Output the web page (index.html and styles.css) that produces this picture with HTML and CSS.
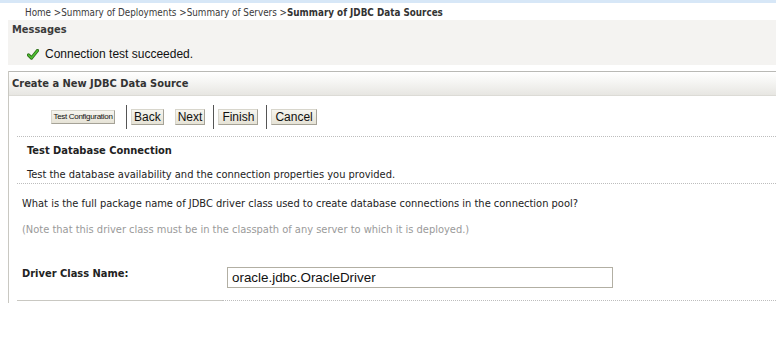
FILE: index.html
```html
<!DOCTYPE html>
<html lang="en">
<head>
  <meta charset="UTF-8">
  <title>Create a New JDBC Data Source</title>
  <link rel="stylesheet" href="styles.css">
</head>
<body>
  <div class="top-bar"></div>

  <!-- Breadcrumb -->
  <div class="breadcrumb">
    <a>Home</a> &gt;<a>Summary of Deployments</a> &gt;<a>Summary of Servers</a> &gt;<b>Summary of JDBC Data Sources</b>
  </div>

  <!-- Messages -->
  <div class="messages">
    <div class="messages-title">Messages</div>
    <div class="message">
      <svg class="check-icon" width="12" height="11" viewBox="0 0 12 11">
        <path d="M1.5 6 L4.5 9 L10.5 1.5" fill="none" stroke="#2f6f1a" stroke-width="3.2" stroke-linecap="round" stroke-linejoin="round"/>
        <path d="M1.5 6 L4.5 9 L10.5 1.5" fill="none" stroke="#4fc133" stroke-width="1.6" stroke-linecap="round" stroke-linejoin="round"/>
      </svg>
      <span>Connection test succeeded.</span>
    </div>
  </div>

  <!-- Assistant panel -->
  <div class="panel">
    <div class="panel-header">Create a New JDBC Data Source</div>
    <div class="panel-body">
      <div class="button-bar">
        <button class="btn btn-small">Test Configuration</button>
        <span class="separator separator-first"></span>
        <button class="btn">Back</button>
        <button class="btn btn-next">Next</button>
        <span class="separator"></span>
        <button class="btn btn-wide">Finish</button>
        <span class="separator"></span>
        <button class="btn btn-wide">Cancel</button>
      </div>

      <div class="intro">
        <div class="intro-title">Test Database Connection</div>
        <div class="intro-text">Test the database availability and the connection properties you provided.</div>
      </div>

      <div class="question">What is the full package name of JDBC driver class used to create database connections in the connection pool?</div>
      <div class="note">(Note that this driver class must be in the classpath of any server to which it is deployed.)</div>

      <div class="field-row">
        <label class="field-label" for="driver-class">Driver Class Name:</label>
        <div class="field-value">
          <input type="text" id="driver-class" value="oracle.jdbc.OracleDriver">
        </div>
      </div>
    </div>
  </div>
</body>
</html>
```

FILE: styles.css
```css
:root {
  --text: #222222;
  --muted: #9a9a9a;
  --line: #c9c8c2;
  --dots: #bdbdbd;
  --msg-bg: #f4f3f1;
}

body {
  margin: 0;
  font-family: 'DejaVu Sans Condensed', 'DejaVu Sans', sans-serif;
  font-size: 11px;
  color: var(--text);
  background: #ffffff;
}

.top-bar {
  height: 3px;
  background: #d7e7f7;
}

.breadcrumb {
  height: 16px;
  padding-top: 1px;
  line-height: 17px;
  padding-left: 25px;
  font-size: 9.8px;
  color: #3a3a3a;
}

.breadcrumb b {
  color: #333333;
}

/* Messages */
.messages {
  margin-left: 8px;
  height: 45px;
  background: var(--msg-bg);
}

.messages-title {
  height: 18px;
  line-height: 19px;
  padding-left: 4px;
  font-weight: bold;
  color: #3b3b3b;
}

.message {
  display: flex;
  align-items: center;
  height: 18px;
  margin-top: 7px;
  padding-left: 19px;
  font-family: 'Liberation Sans', Arial, sans-serif;
  font-size: 12px;
  color: #111111;
}

.check-icon {
  margin-right: 6px;
}

/* Panel */
.panel {
  margin-top: 6px;
  margin-left: 8px;
  border-left: 1px solid var(--line);
  padding-bottom: 2px;
}

.panel-header {
  height: 23px;
  line-height: 23px;
  padding-left: 3px;
  border-top: 1px solid #b9b9b5;
  border-bottom: 1px solid #dcdbd6;
  background: linear-gradient(#ffffff, #f6f6f4 40%, #e7e6e2);
  font-weight: bold;
  color: #333333;
}

.panel-body {
  padding-left: 8px;
}

.button-bar {
  display: flex;
  align-items: center;
  height: 24px;
  padding: 9px 0 7px 34px;
  border-bottom: 1px dotted var(--dots);
}

.btn {
  height: 16px;
  padding: 0 2px;
  border: 1px solid #a5a297;
  border-top-color: #d8d6cc;
  border-left-color: #d8d6cc;
  background: linear-gradient(#f6f5ef, #e6e3d6);
  font-family: 'Liberation Sans', Arial, sans-serif;
  font-size: 12px;
  line-height: 14px;
  color: #111111;
}

.btn-wide {
  padding: 0 3px;
}

.btn-small {
  height: 14px;
  width: 64px;
  padding: 0;
  font-size: 8px;
  letter-spacing: -0.3px;
  line-height: 12px;
}

.btn-next {
  margin-left: 11px;
}

.separator {
  width: 1px;
  height: 24px;
  margin: 0 4px 0 8px;
  background: #555555;
}

.separator-first {
  margin-left: 11px;
}

.intro {
  padding: 6px 0 0 10px;
  border-bottom: 1px dotted var(--dots);
}

.intro-title {
  line-height: 16px;
  font-weight: bold;
}

.intro-text {
  margin-top: 8px;
  line-height: 16px;
}

.question {
  margin-top: 12px;
  padding-left: 5px;
  line-height: 16px;
}

.note {
  margin-top: 10px;
  padding-left: 5px;
  line-height: 16px;
  color: var(--muted);
}

.field-row {
  display: flex;
  margin-top: 24px;
}

.field-label {
  width: 200px;
  padding: 4px 0 0 5px;
  line-height: 16px;
  font-weight: bold;
  border-bottom: 1px solid var(--line);
}

.field-value {
  flex: 1;
  padding: 5px 0 12px 5px;
  border-bottom: 1px dotted var(--dots);
}

.field-value input {
  box-sizing: border-box;
  width: 386px;
  height: 21px;
  margin: 0;
  padding: 0 4px;
  border: 1px solid #b2afa3;
  font-family: 'Liberation Sans', Arial, sans-serif;
  font-size: 13.4px;
  color: #111111;
}
```
